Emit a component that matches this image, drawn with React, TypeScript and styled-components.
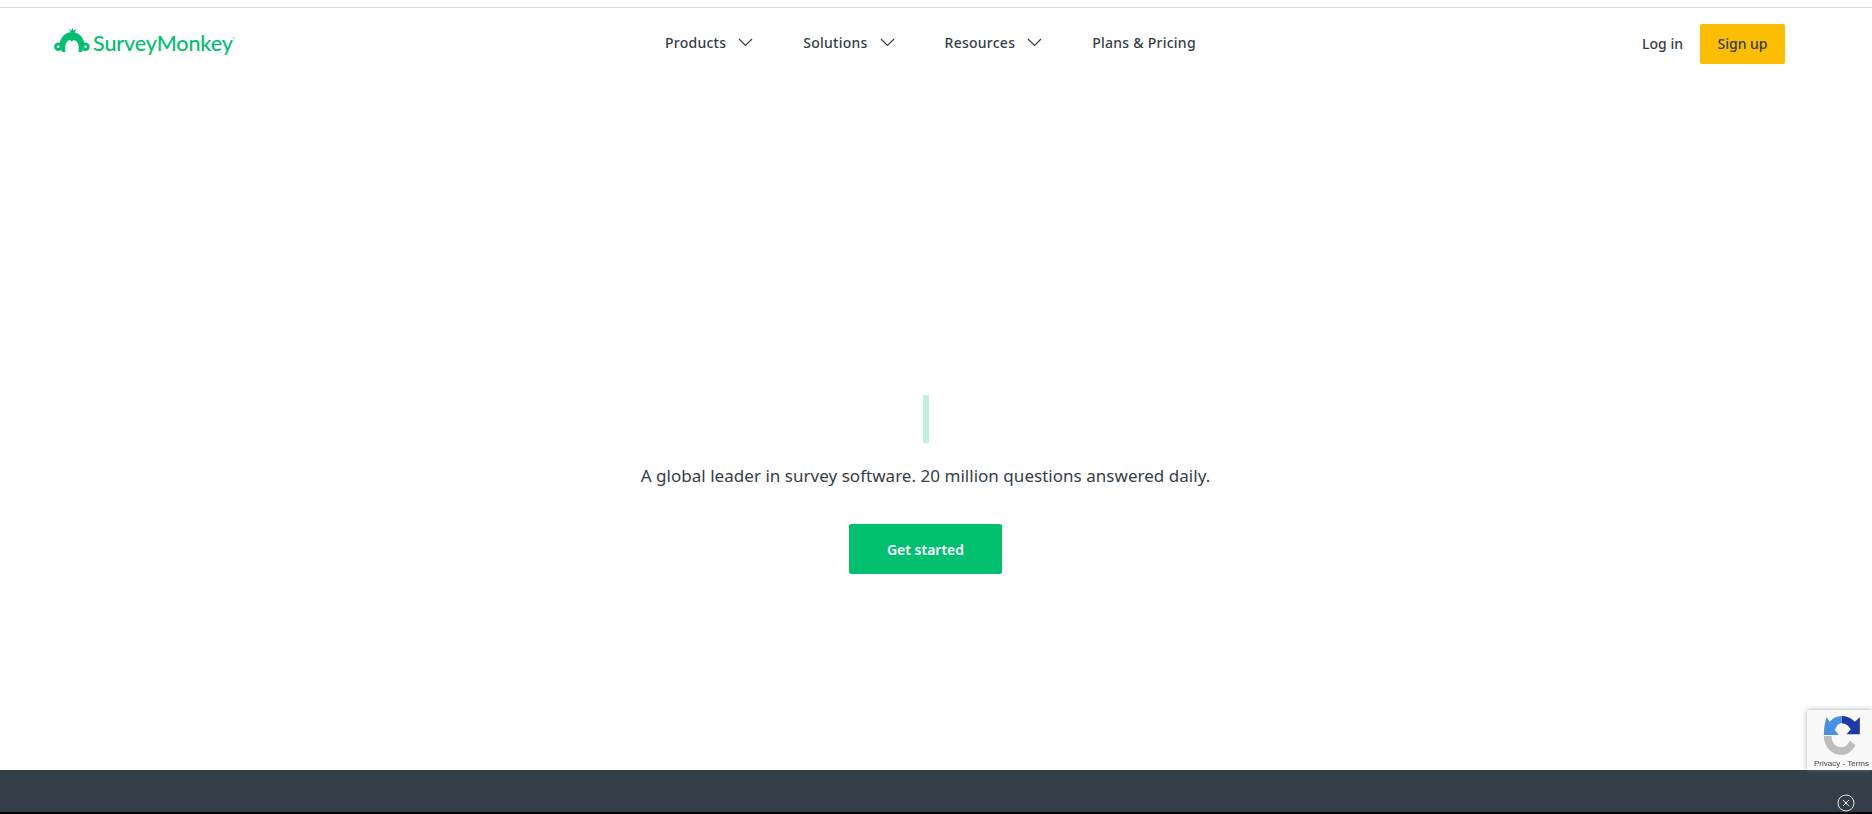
import React from "react";
import styled, { createGlobalStyle } from "styled-components";

const GlobalStyle = createGlobalStyle`
  html, body { margin: 0; padding: 0; height: 100%; overflow: hidden; background: #fff; }
  * { box-sizing: border-box; }
`;

const Page = styled.div`
  height: 100vh;
  display: flex;
  flex-direction: column;
  padding-top: 7px;
  font-family: "Noto Sans", "Liberation Sans", sans-serif;
  color: #333e48;
`;

const Header = styled.header`
  height: 72px;
  flex: none;
  border-top: 1px solid #dcdcdc;
  display: flex;
  align-items: center;
  padding: 0 87px 0 54px;
`;

const Logo = styled.a`
  display: flex;
  align-items: center;
  gap: 3px;
  width: 611px;
  padding-bottom: 2px;
  color: #00bf6f;
  font-family: "Lato", sans-serif;
  font-size: 21.5px;
  font-weight: 500;
  letter-spacing: -0.1px;
  flex: none;
`;

const Mark = styled.svg`
  margin-bottom: 4px;
`;

const TradeMark = styled.sup`
  font-size: 8px;
  line-height: 0;
  vertical-align: 8px;
`;

const Nav = styled.nav`
  display: flex;
  align-items: center;
  padding-bottom: 2px;
`;

const NavItem = styled.a<{ $gap: number }>`
  display: flex;
  align-items: center;
  gap: 12px;
  margin-right: ${(p) => p.$gap}px;
  font-size: 14px;
  font-weight: 500;
  line-height: 20px;
  letter-spacing: 0.25px;
  color: #333e48;
`;

const RightGroup = styled.div`
  margin-left: auto;
  display: flex;
  align-items: center;
  gap: 17px;
`;

const LogIn = styled.a`
  font-size: 14px;
  font-weight: 500;
  color: #333e48;
`;

const SignUp = styled.a`
  width: 85px;
  height: 40px;
  background: #fdbd00;
  border-radius: 2px;
  display: flex;
  align-items: center;
  justify-content: center;
  font-size: 14px;
  font-weight: 500;
  color: #333e48;
`;

const Main = styled.main`
  flex: 1;
  display: flex;
  flex-direction: column;
  align-items: center;
  padding: 316px 21px 0 0;
`;

const Caret = styled.div`
  width: 6px;
  height: 48px;
  background: #c2eedc;
`;

const Tagline = styled.p`
  margin: 21px 0 0;
  font-size: 17px;
  line-height: 24px;
  letter-spacing: 0.03px;
  color: #333e48;
`;

const GetStarted = styled.a`
  margin-top: 36px;
  width: 153px;
  height: 50px;
  background: #00bf6f;
  border-radius: 2px;
  color: #fff;
  font-size: 14px;
  font-weight: 600;
  display: flex;
  align-items: center;
  justify-content: center;
`;

const Footer = styled.footer`
  height: 44px;
  flex: none;
  background: #333e48;
  border-bottom: 2px solid #000;
  position: relative;
`;

const CloseButton = styled.svg`
  position: absolute;
  right: 17px;
  top: 24px;
  width: 18px;
  height: 18px;
`;

const RecaptchaBadge = styled.div`
  position: fixed;
  right: 0;
  bottom: 44px;
  width: 65px;
  height: 60px;
  background: #f9f9f9;
  border-radius: 2px 0 0 0;
  box-shadow: 0 0 5px rgba(128, 128, 128, 0.7);
  display: flex;
  flex-direction: column;
  align-items: center;
  padding: 6px 0 0 4px;
`;

const BadgeTerms = styled.div`
  font-family: "Liberation Sans", sans-serif;
  font-size: 8px;
  line-height: 10px;
  color: #444;
  white-space: nowrap;
  margin-top: 4px;
`;

const Chevron = () => (
  <svg width="15" height="9" viewBox="0 0 15 9" fill="none">
    <path d="M1 1l6.5 6.5L14 1" stroke="#333e48" strokeWidth="1.2" />
  </svg>
);

const MonkeyMark = () => (
  <Mark width="36" height="25" viewBox="0 0 36 25" fill="#00bf6f">
    <path d="M5.500 17C6 9.500 11 4.500 17 4.300L14.500 0.800L17.500 2.500L18.500 0L19.500 2.600L22.500 1.200L20.500 4.500C26 5.500 30 10 30.500 17L28 24H24.500C25 20 25 15 22 13C20 11.500 18.500 12.500 17.800 13.800C17 12.500 15.500 11.500 13.500 13C11 15 11 20 11.500 24H8Z" />
    <circle cx="4.300" cy="18.700" r="4.200" />
    <circle cx="31.500" cy="18.700" r="4.200" />
    <circle cx="4.300" cy="18.700" r="1.300" fill="#fff" />
    <circle cx="31.500" cy="18.700" r="1.300" fill="#fff" />
  </Mark>
);

const RecaptchaMark = () => (
  <svg width="37" height="39" viewBox="25 18 110 117">
    <path fill="#1c3aa9" d="M80 18C95 18 110 24 120 35L135 22V73H95L108 58C101 47 91 40 80 40Z" />
    <path fill="#4a90e2" d="M80 18C65 18 54 25 45 35L35 22C30 38 27 55 27 75H72L60 60C65 48 72 40 80 40Z" />
    <path fill="#bdbdbd" d="M27 78H50C50 98 63 112 80 112C90 112 99 105 105 92L122 106C112 124 97 135 80 135C50 135 27 110 27 78Z" />
  </svg>
);

export default function App() {
  return (
    <Page>
      <GlobalStyle />
      <Header>
        <Logo>
          <MonkeyMark />
          <span>
            SurveyMonkey<TradeMark>'</TradeMark>
          </span>
        </Logo>
        <Nav>
          <NavItem $gap={50}>
            Products <Chevron />
          </NavItem>
          <NavItem $gap={50}>
            Solutions <Chevron />
          </NavItem>
          <NavItem $gap={50}>
            Resources <Chevron />
          </NavItem>
          <NavItem $gap={0}>Plans &amp; Pricing</NavItem>
        </Nav>
        <RightGroup>
          <LogIn>Log in</LogIn>
          <SignUp>Sign up</SignUp>
        </RightGroup>
      </Header>
      <Main>
        <Caret />
        <Tagline>A global leader in survey software. 20 million questions answered daily.</Tagline>
        <GetStarted>Get started</GetStarted>
      </Main>
      <Footer>
        <CloseButton viewBox="0 0 18 18" fill="none" stroke="#e6e8ea" strokeWidth="1">
          <circle cx="9" cy="9" r="8" />
          <path d="M6 6l6 6M12 6l-6 6" />
        </CloseButton>
      </Footer>
      <RecaptchaBadge>
        <RecaptchaMark />
        <BadgeTerms>Privacy - Terms</BadgeTerms>
      </RecaptchaBadge>
    </Page>
  );
}
